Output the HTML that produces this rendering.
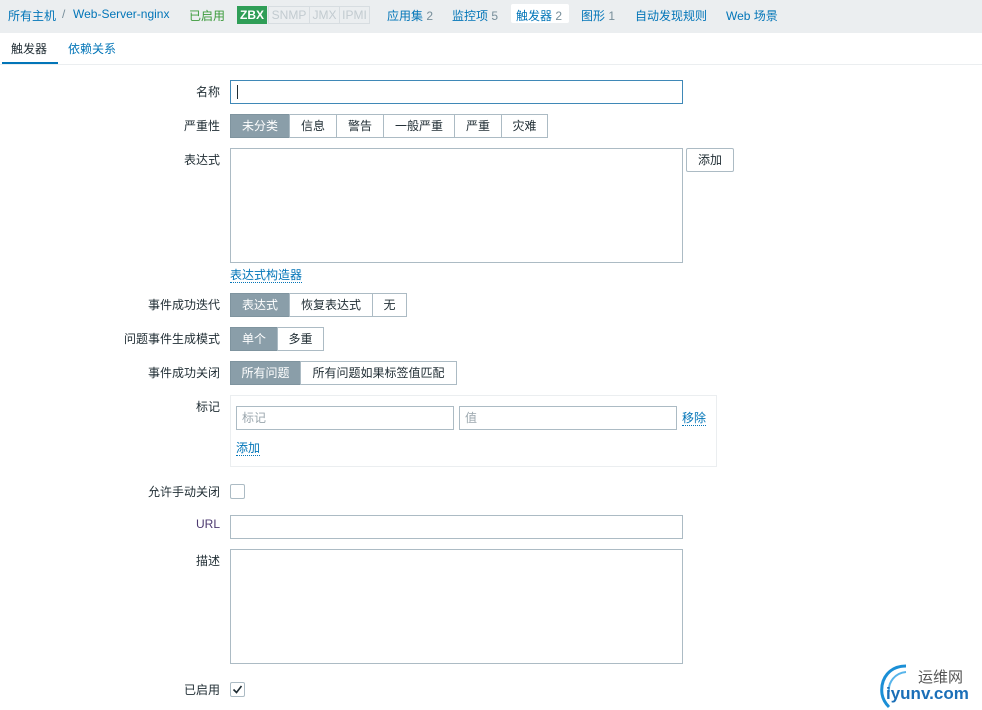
<!DOCTYPE html>
<html><head><meta charset="utf-8"><style>
*{box-sizing:border-box;margin:0;padding:0}
body{width:982px;height:710px;background:#fff;font:12px "Liberation Sans","Noto Sans CJK SC",sans-serif;color:#1f2c33;position:relative;overflow:hidden}
.a{position:absolute;white-space:nowrap}
.top{position:absolute;left:0;top:0;width:982px;height:33px;background:#ebeef0}
.lnk{color:#0275b8}
.gray{color:#768d99}
.lbl{position:absolute;right:762px;white-space:nowrap;text-align:right}
.inp{position:absolute;border:1px solid #acbbc4;background:#fff}
.seg{position:absolute;height:24px;display:flex}
.seg div{border:1px solid #acbbc4;margin-left:-1px;height:24px;line-height:22px;text-align:center;background:#fff}
.seg div:first-child{margin-left:0}
.seg .on{background:#8a9ea9;color:#fff;border-color:#7f949f}
.ul{color:#0275b8;text-decoration:none;border-bottom:1px dotted #0275b8}
.cb{position:absolute;width:15px;height:15px;border:1px solid #acbbc4;border-radius:2px;background:#fff}
.tag{position:absolute;top:6px;height:18px;line-height:16px;border:1px solid #d7dde1;color:#c2cbd0;font-size:12px;padding:0 2px;text-align:center}
</style></head><body>
<div class="top"></div>
<div class="a lnk" style="left:8px;top:7px">所有主机</div>
<div class="a gray" style="left:62px;top:7px">/</div>
<div class="a lnk" style="left:73px;top:7px">Web-Server-nginx</div>
<div class="a" style="left:189px;top:7px;color:#3b9a3b">已启用</div>
<div class="tag" style="left:237px;width:30px;background:#2f9e57;border-color:#2f9e57;color:#fff;font-weight:bold">ZBX</div>
<div class="tag" style="left:268px;width:42px">SNMP</div>
<div class="tag" style="left:309px;width:31px">JMX</div>
<div class="tag" style="left:339px;width:31px">IPMI</div>
<div class="a lnk" style="left:387px;top:7px">应用集 <span class="gray">2</span></div>
<div class="a lnk" style="left:452px;top:7px">监控项 <span class="gray">5</span></div>
<div class="a" style="left:511px;top:4px;width:58px;height:19px;background:#fff;border-radius:2px"></div>
<div class="a lnk" style="left:516px;top:7px">触发器 <span class="gray">2</span></div>
<div class="a lnk" style="left:581px;top:7px">图形 <span class="gray">1</span></div>
<div class="a lnk" style="left:635px;top:7px">自动发现规则</div>
<div class="a lnk" style="left:726px;top:7px">Web 场景</div>

<div class="a" style="left:11px;top:40px">触发器</div>
<div class="a" style="left:2px;top:62px;width:56px;height:3px;background:#0275b8"></div>
<div class="a lnk" style="left:68px;top:40px">依赖关系</div>
<div class="a" style="left:0;top:64px;width:982px;height:1px;background:#ebeef0"></div>

<div class="lbl" style="top:83px">名称</div>
<div class="inp" style="left:230px;top:80px;width:453px;height:24px;border-color:#3f88b7"></div>
<div class="a" style="left:237px;top:85px;width:1px;height:14px;background:#1f2c33"></div>

<div class="lbl" style="top:117px">严重性</div>
<div class="seg" style="left:230px;top:114px"><div class="on" style="width:60px">未分类</div><div style="width:48px">信息</div><div style="width:48px">警告</div><div style="width:72px">一般严重</div><div style="width:48px">严重</div><div style="width:47px">灾难</div></div>

<div class="lbl" style="top:151px">表达式</div>
<div class="inp" style="left:230px;top:148px;width:453px;height:115px"></div>
<div class="inp" style="left:686px;top:148px;width:48px;height:24px;line-height:22px;text-align:center;border-radius:2px">添加</div>
<div class="a" style="left:230px;top:266px"><span class="ul">表达式构造器</span></div>

<div class="lbl" style="top:296px">事件成功迭代</div>
<div class="seg" style="left:230px;top:293px"><div class="on" style="width:60px">表达式</div><div style="width:84px">恢复表达式</div><div style="width:35px">无</div></div>

<div class="lbl" style="top:330px">问题事件生成模式</div>
<div class="seg" style="left:230px;top:327px"><div class="on" style="width:48px">单个</div><div style="width:47px">多重</div></div>

<div class="lbl" style="top:364px">事件成功关闭</div>
<div class="seg" style="left:230px;top:361px"><div class="on" style="width:71px">所有问题</div><div style="width:157px">所有问题如果标签值匹配</div></div>

<div class="lbl" style="top:398px">标记</div>
<div class="inp" style="left:230px;top:395px;width:487px;height:72px;border-color:#ebeef0"></div>
<div class="inp" style="left:236px;top:406px;width:218px;height:24px;color:#9aa6ad;padding-left:5px;line-height:22px">标记</div>
<div class="inp" style="left:459px;top:406px;width:218px;height:24px;color:#9aa6ad;padding-left:5px;line-height:22px">值</div>
<div class="a" style="left:682px;top:409px"><span class="ul">移除</span></div>
<div class="a" style="left:236px;top:439px"><span class="ul">添加</span></div>

<div class="lbl" style="top:483px">允许手动关闭</div>
<div class="cb" style="left:230px;top:484px"></div>

<div class="lbl" style="top:517px;color:#4d3a70">URL</div>
<div class="inp" style="left:230px;top:515px;width:453px;height:24px"></div>

<div class="lbl" style="top:552px">描述</div>
<div class="inp" style="left:230px;top:549px;width:453px;height:115px"></div>

<div class="lbl" style="top:681px">已启用</div>
<div class="cb" style="left:230px;top:682px"><svg width="13" height="13" viewBox="0 0 13 13" style="position:absolute;left:0;top:0"><path d="M2.5 6.5l3 3 5-6.5" fill="none" stroke="#1f2c33" stroke-width="1.6"/></svg></div>

<svg class="a" style="left:876px;top:660px" width="40" height="50" viewBox="0 0 40 50"><path d="M30 6C14 6 4 18 6 34c1 6 4 10 7 13" fill="none" stroke="#1b8fd6" stroke-width="3"/><path d="M30 12C19 13 12 22 13 32" fill="none" stroke="#57b4ea" stroke-width="2"/></svg>
<div class="a" style="left:918px;top:666px;font-size:15px;color:#555">运维网</div>
<div class="a" style="left:886px;top:684px;font-size:17px;color:#1b6fb8;font-weight:bold">iyunv.com</div>
</body></html>
